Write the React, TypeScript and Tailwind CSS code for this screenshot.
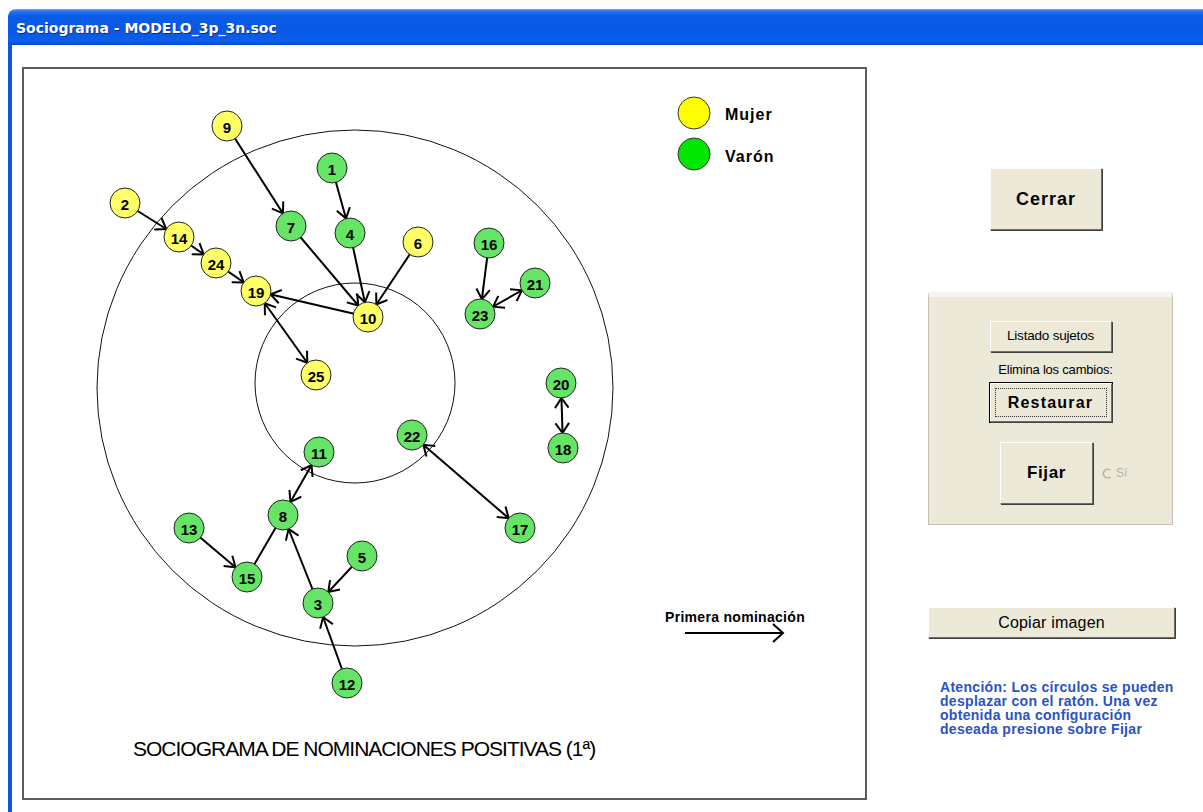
import React from "react";

type N = { id: number; x: number; y: number; f: boolean };

const nodes: N[] = [
  { id: 9, x: 227, y: 126, f: true },
  { id: 1, x: 332, y: 168, f: false },
  { id: 2, x: 125, y: 203, f: true },
  { id: 7, x: 291, y: 226, f: false },
  { id: 4, x: 350, y: 233, f: false },
  { id: 14, x: 179, y: 237, f: true },
  { id: 6, x: 418, y: 242, f: true },
  { id: 16, x: 489, y: 243, f: false },
  { id: 24, x: 216, y: 263, f: true },
  { id: 21, x: 535, y: 283, f: false },
  { id: 19, x: 256, y: 291, f: true },
  { id: 23, x: 480, y: 314, f: false },
  { id: 10, x: 368, y: 317, f: true },
  { id: 25, x: 316, y: 375, f: true },
  { id: 20, x: 561, y: 383, f: false },
  { id: 22, x: 412, y: 435, f: false },
  { id: 18, x: 563, y: 448, f: false },
  { id: 11, x: 319, y: 452, f: false },
  { id: 8, x: 283, y: 515, f: false },
  { id: 13, x: 189, y: 528, f: false },
  { id: 17, x: 520, y: 528, f: false },
  { id: 5, x: 362, y: 556, f: false },
  { id: 15, x: 247, y: 577, f: false },
  { id: 3, x: 318, y: 603, f: false },
  { id: 12, x: 347, y: 683, f: false },
];

// [from, to, kind] kind: 1 = arrow at target, 2 = arrows both ends, 0 = plain
const edges: [number, number, number][] = [
  [9, 7, 1],
  [1, 4, 1],
  [2, 14, 1],
  [14, 24, 1],
  [24, 19, 1],
  [7, 10, 1],
  [4, 10, 1],
  [6, 10, 1],
  [10, 19, 1],
  [19, 25, 2],
  [16, 23, 1],
  [23, 21, 2],
  [20, 18, 2],
  [22, 17, 2],
  [11, 8, 2],
  [13, 15, 1],
  [15, 8, 0],
  [3, 8, 1],
  [5, 3, 1],
  [12, 3, 1],
];

const R = 15;
const byId = (id: number) => nodes.find((n) => n.id === id)!;

function head(ax: number, ay: number, bx: number, by: number) {
  const dx = bx - ax;
  const dy = by - ay;
  const L = Math.hypot(dx, dy);
  const ux = dx / L;
  const uy = dy / L;
  const tx = bx - ux * R;
  const ty = by - uy * R;
  const a = 0.6;
  const len = 12;
  const bx0 = -ux;
  const by0 = -uy;
  const r1x = bx0 * Math.cos(a) - by0 * Math.sin(a);
  const r1y = bx0 * Math.sin(a) + by0 * Math.cos(a);
  const r2x = bx0 * Math.cos(-a) - by0 * Math.sin(-a);
  const r2y = bx0 * Math.sin(-a) + by0 * Math.cos(-a);
  return `M${tx + r1x * len} ${ty + r1y * len} L${tx} ${ty} L${tx + r2x * len} ${ty + r2y * len}`;
}

const FONT = "[font-family:'Liberation_Sans',Arial,sans-serif]";
const BTN =
  "bg-[#ece9d8] border border-t-white border-l-white border-r-[#716f64] border-b-[#716f64] shadow-[1px_1px_0_#404040] flex items-center justify-center text-black";

function Diagram() {
  return (
    <svg width={841} height={668} viewBox="24 69 841 668" className="block">
      <circle cx={355} cy={388} r={258} fill="none" stroke="#111" strokeWidth={1} />
      <circle cx={355} cy={383} r={100} fill="none" stroke="#111" strokeWidth={1} />
      {edges.map(([a, b, k], i) => {
        const A = byId(a);
        const B = byId(b);
        return (
          <g key={i} stroke="#000" strokeWidth={2} fill="none">
            <line x1={A.x} y1={A.y} x2={B.x} y2={B.y} />
            {k >= 1 && <path d={head(A.x, A.y, B.x, B.y)} />}
            {k === 2 && <path d={head(B.x, B.y, A.x, A.y)} />}
          </g>
        );
      })}
      {nodes.map((n) => (
        <g key={n.id}>
          <circle cx={n.x} cy={n.y} r={R} fill={n.f ? "#ffff66" : "#66e466"} stroke="#222" strokeWidth={1} />
          <text
            x={n.x}
            y={n.y + 1}
            textAnchor="middle"
            dominantBaseline="central"
            fontFamily="'Liberation Sans', Arial, sans-serif"
            fontWeight="bold"
            fontSize={15}
            fill="#000"
          >
            {n.id}
          </text>
        </g>
      ))}
      {/* legend */}
      <circle cx={694} cy={113} r={16} fill="#ffff00" stroke="#333" strokeWidth={1} />
      <circle cx={694} cy={154} r={16} fill="#00e600" stroke="#333" strokeWidth={1} />
      <text x={725} y={114} dominantBaseline="central" fontFamily="'Liberation Sans', Arial, sans-serif" fontWeight="bold" fontSize={16} letterSpacing={1}>
        Mujer
      </text>
      <text x={725} y={156} dominantBaseline="central" fontFamily="'Liberation Sans', Arial, sans-serif" fontWeight="bold" fontSize={16} letterSpacing={1}>
        Varón
      </text>
      {/* key */}
      <text x={665} y={617} dominantBaseline="central" fontFamily="'Liberation Sans', Arial, sans-serif" fontWeight="bold" fontSize={14} letterSpacing={0.3}>
        Primera nominación
      </text>
      <g stroke="#000" strokeWidth={2} fill="none">
        <line x1={685} y1={633} x2={783} y2={633} />
        <path d="M773 624 L783 633 L773 642" />
      </g>
    </svg>
  );
}

export default function App() {
  return (
    <div className={`w-[1203px] h-[812px] bg-white overflow-hidden pt-[9px] pl-[8px] ${FONT}`}>
      <div className="flex flex-col h-[803px] w-[1195px]">
        <div className="h-[36px] shrink-0 rounded-tl-[8px] bg-[linear-gradient(180deg,#6aaeff_0%,#2a74ee_6%,#0a5ce6_20%,#0858e4_60%,#0a5fec_88%,#0249d6_100%)] flex items-center pl-[8px] pt-[3px]">
          <span className="text-white font-bold text-[14px] [font-family:'DejaVu_Sans',Verdana,sans-serif] [text-shadow:1px_1px_0_#0b2f8f]">
            Sociograma - MODELO_3p_3n.soc
          </span>
        </div>
        <div className="flex-1 flex border-l-4 border-l-[#0a52ec] bg-white">
          {/* canvas */}
          <div className="ml-[10px] mt-[22px] w-[845px] h-[733px] shrink-0 border-2 border-[#5c5c5c] bg-white flex flex-col">
            <Diagram />
            <div className="flex-1 pl-[109px]">
              <div className="text-[21px] leading-[24px] tracking-[-1px] text-black">
                SOCIOGRAMA DE NOMINACIONES POSITIVAS (1ª)
              </div>
            </div>
          </div>
          {/* right column */}
          <div className="ml-[61px] w-[247px] shrink-0 flex flex-col">
            <button className={`${BTN} mt-[123px] ml-[62px] w-[112px] h-[62px] text-[18px] font-bold tracking-[1px]`}>
              Cerrar
            </button>
            <div className="mt-[62px] w-[245px] h-[233px] bg-[#ece9d8] border border-[#c4c1b3] border-t-[5px] border-t-[#f5f4ef] flex flex-col items-center pt-[24px]">
              <button className={`${BTN} w-[122px] h-[31px] text-[13.5px] tracking-[-0.2px]`}>Listado sujetos</button>
              <div className="mt-[10px] text-[13px] leading-[15px] tracking-[-0.2px] pl-[10px]">Elimina los cambios:</div>
              <div className="mt-[5px] w-[124px] h-[41px] border border-black">
                <button className={`${BTN} w-full h-full text-[16px] font-bold tracking-[1.2px] relative`}>
                  <span className="absolute inset-[4px] border border-dotted border-[#333]" />
                  Restaurar
                </button>
              </div>
              <div className="mt-[19px] self-start ml-[71px] flex items-center">
                <button className={`${BTN} w-[93px] h-[62px] text-[17px] font-bold tracking-[0.6px]`}>Fijar</button>
                <div className="ml-[9px] flex items-center gap-[3px] text-[12px] text-[#b5b2a4]">
                  <svg width="11" height="11" viewBox="0 0 11 11">
                    <path d="M8.5 2.2 A4.3 4.3 0 1 0 8.5 8.8" fill="none" stroke="#b5b2a4" strokeWidth="1.6" />
                  </svg>
                  <span>Sí</span>
                </div>
              </div>
            </div>
            <button className={`${BTN} mt-[82px] w-[247px] h-[31px] text-[16px] tracking-[0.2px]`}>Copiar imagen</button>
            <div className="mt-[42px] pl-[12px] text-[14px] font-bold leading-[14px] text-[#2c52c2] tracking-[0.3px] whitespace-nowrap">
              Atención: Los círculos se pueden
              <br />
              desplazar con el ratón. Una vez
              <br />
              obtenida una configuración
              <br />
              deseada presione sobre Fijar
            </div>
          </div>
        </div>
      </div>
    </div>
  );
}
